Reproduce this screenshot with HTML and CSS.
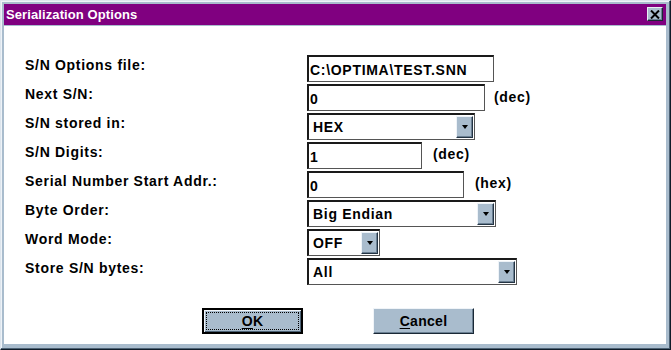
FILE: index.html
```html
<!DOCTYPE html>
<html lang="en">
<head>
    <meta charset="UTF-8">
    <meta name="viewport" content="width=device-width, initial-scale=1.0">
    <title>Serialization Options</title>
    <link rel="stylesheet" href="styles.css">
</head>
<body>
    <div class="dialog">
        <div class="titlebar">
            <span class="title">Serialization Options</span>
            <button class="close-btn" aria-label="Close">
                <svg width="10" height="9" viewBox="0 0 10 9">
                    <path d="M1 0.5 L9 8.5 M9 0.5 L1 8.5" stroke="#000" stroke-width="2" fill="none"/>
                </svg>
            </button>
        </div>
        <div class="client">
            <div class="form">
                <div class="label">S/N Options file:</div>
                <div class="field">
                    <div class="textbox w-file">C:\OPTIMA\TEST.SNN</div>
                </div>

                <div class="label">Next S/N:</div>
                <div class="field">
                    <div class="textbox w-next">0</div>
                    <span class="unit unit-next">(dec)</span>
                </div>

                <div class="label">S/N stored in:</div>
                <div class="field">
                    <div class="combo w-stored"><span>HEX</span><span class="combo-btn"></span></div>
                </div>

                <div class="label">S/N Digits:</div>
                <div class="field">
                    <div class="textbox w-digits">1</div>
                    <span class="unit">(dec)</span>
                </div>

                <div class="label">Serial Number Start Addr.:</div>
                <div class="field">
                    <div class="textbox w-addr">0</div>
                    <span class="unit">(hex)</span>
                </div>

                <div class="label">Byte Order:</div>
                <div class="field">
                    <div class="combo w-order"><span>Big Endian</span><span class="combo-btn"></span></div>
                </div>

                <div class="label">Word Mode:</div>
                <div class="field">
                    <div class="combo w-mode"><span>OFF</span><span class="combo-btn"></span></div>
                </div>

                <div class="label">Store S/N bytes:</div>
                <div class="field">
                    <div class="combo w-bytes"><span>All</span><span class="combo-btn"></span></div>
                </div>
            </div>

            <div class="buttons">
                <button class="btn btn-default"><span class="focus"><u>O</u>K</span></button>
                <button class="btn"><span><u>C</u>ancel</span></button>
            </div>
        </div>
    </div>
</body>
</html>
```

FILE: styles.css
```css
body {
    margin: 0;
    background: #ffffff;
    font-family: "Liberation Sans", Arial, sans-serif;
    font-weight: bold;
    color: #000;
}
.dialog {
    width: 671px;
    height: 350px;
    box-sizing: border-box;
    display: flex;
    flex-direction: column;
    background: #a9bccd;
    border: 1px solid;
    border-color: #dde5ed #0f1c28 #0f1c28 #dde5ed;
    box-shadow: inset -1px -1px 0 #4d6275, inset 1px 1px 0 #eef3f8;
    padding: 3px 4px 5px 3px;
}
.titlebar {
    height: 21px;
    background: #800080;
    display: flex;
    align-items: center;
    justify-content: space-between;
    padding: 0 3px 1px 2px;
    box-sizing: border-box;
}
.title {
    color: #fff;
    font-size: 13px;
    letter-spacing: 0.1px;
}
.close-btn {
    width: 16px;
    height: 14px;
    padding: 0;
    margin: 0;
    background: #a9bccd;
    border: 1px solid;
    border-color: #e8eef4 #1a2836 #1a2836 #e8eef4;
    box-shadow: inset -1px -1px 0 #6b8093;
    display: flex;
    align-items: center;
    justify-content: center;
}
.client {
    flex: 1;
    margin-top: 1px;
    background: #fff;
    padding: 29px 0 0 21px;
    box-sizing: border-box;
}
.form {
    display: grid;
    grid-template-columns: 282px auto;
    grid-auto-rows: 27px;
    row-gap: 2px;
    font-size: 14px;
    letter-spacing: 0.7px;
}
.label {
    padding-top: 2px;
    line-height: 17px;
}
.field {
    display: flex;
    align-items: flex-start;
    gap: 11px;
}
.unit {
    line-height: 17px;
    padding-top: 4px;
}
.unit-next {
    margin-left: -2px;
    padding-top: 5px;
}
.textbox,
.combo {
    height: 27px;
    box-sizing: border-box;
    background: #fff;
    border-style: solid;
    border-color: #1a1a1a #555 #555 #1a1a1a;
    border-width: 2px 1px 1px 2px;
    display: flex;
    align-items: center;
    padding-left: 1px;
    padding-top: 1px;
    white-space: nowrap;
}
.combo {
    justify-content: space-between;
    padding: 1px 1px 1px 4px;
}
.combo-btn {
    width: 17px;
    height: 22px;
    box-sizing: border-box;
    background: #a9bccd;
    border: 1px solid;
    border-color: #eef3f8 #243444 #243444 #eef3f8;
    box-shadow: inset -1px -1px 0 #6b8093;
    display: flex;
    align-items: center;
    justify-content: center;
}
.combo-btn::after {
    content: "";
    border-left: 3px solid transparent;
    border-right: 3px solid transparent;
    border-top: 4px solid #000;
}
.w-file { width: 187px; }
.w-next { width: 178px; }
.w-stored { width: 168px; }
.w-digits { width: 115px; }
.w-addr { width: 157px; }
.w-order { width: 189px; }
.w-mode { width: 73px; }
.w-bytes { width: 210px; }

.buttons {
    display: flex;
    gap: 70px;
    margin-top: 23px;
    padding-left: 177px;
}
.btn {
    width: 101px;
    height: 26px;
    padding: 0;
    background: #a9bccd;
    border: 1px solid;
    border-color: #f0f4f8 #1a2836 #1a2836 #f0f4f8;
    box-shadow: inset -1px -1px 0 #6b8093;
    font-family: "Liberation Sans", Arial, sans-serif;
    font-weight: bold;
    font-size: 14px;
    letter-spacing: 0.3px;
    color: #000;
    display: flex;
    align-items: center;
    justify-content: center;
}
.btn-default {
    border: 2px solid #000;
    box-shadow: inset 1px 1px 0 #f0f4f8, inset -1px -1px 0 #4d6275;
    padding: 2px;
}
.btn-default .focus {
    flex: 1;
    align-self: stretch;
    display: flex;
    align-items: center;
    justify-content: center;
    border: 1px dotted #000;
}
.btn u {
    text-underline-offset: 2px;
}
```
